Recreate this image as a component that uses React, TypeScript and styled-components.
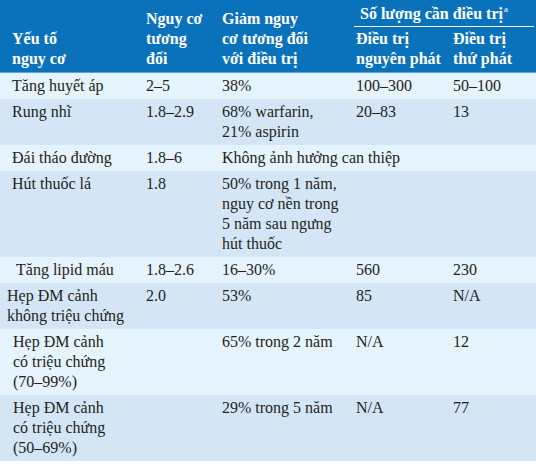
import { FC } from "react";
import styled, { createGlobalStyle } from "styled-components";

const serif = `"Liberation Serif", "DejaVu Serif", serif`;

const GlobalStyle = createGlobalStyle`
	html, body {
		margin: 0;
		padding: 0;
		background: #ffffff;
	}
`;

interface IRow {
	factor: string[];
	relative: string;
	reduction: string[];
	primary?: string;
	secondary?: string;
	span?: boolean;
	indent?: number;
}

const rows: IRow[] = [
	{ factor: ["Tăng huyết áp"], relative: "2–5", reduction: ["38%"], primary: "100–300", secondary: "50–100" },
	{ factor: ["Rung nhĩ"], relative: "1.8–2.9", reduction: ["68% warfarin,", "21% aspirin"], primary: "20–83", secondary: "13" },
	{ factor: ["Đái tháo đường"], relative: "1.8–6", reduction: ["Không ảnh hưởng can thiệp"], span: true },
	{
		factor: ["Hút thuốc lá"],
		relative: "1.8",
		reduction: ["50% trong 1 năm,", "nguy cơ nền trong", "5 năm sau ngưng", "hút thuốc"],
	},
	{ factor: ["Tăng lipid máu"], relative: "1.8–2.6", reduction: ["16–30%"], primary: "560", secondary: "230", indent: 4 },
	{ factor: ["Hẹp ĐM cảnh", "không triệu chứng"], relative: "2.0", reduction: ["53%"], primary: "85", secondary: "N/A", indent: -5 },
	{ factor: ["Hẹp ĐM cảnh", "có triệu chứng", "(70–99%)"], relative: "", reduction: ["65% trong 2 năm"], primary: "N/A", secondary: "12", indent: 1 },
	{ factor: ["Hẹp ĐM cảnh", "có triệu chứng", "(50–69%)"], relative: "", reduction: ["29% trong 5 năm"], primary: "N/A", secondary: "77", indent: 1 },
];

const Lines: FC<{ items: string[] }> = ({ items }) => (
	<>
		{items.map((item, i) => (
			<Line key={i}>{item}</Line>
		))}
	</>
);

export default function App() {
	return (
		<>
			<GlobalStyle />
			<Table>
				<colgroup>
					<col style={{ width: 140 }} />
					<col style={{ width: 76 }} />
					<col style={{ width: 134 }} />
					<col style={{ width: 97 }} />
					<col style={{ width: 89 }} />
				</colgroup>
				<thead>
					<tr>
						<HeadCell rowSpan={2}>
							<Lines items={["Yếu tố", "nguy cơ"]} />
						</HeadCell>
						<HeadCell rowSpan={2}>
							<Lines items={["Nguy cơ", "tương", "đối"]} />
						</HeadCell>
						<HeadCell rowSpan={2}>
							<Lines items={["Giảm nguy", "cơ tương đối", "với điều trị"]} />
						</HeadCell>
						<GroupCell colSpan={2}>
							<GroupTitle>
								Số lượng cần điều trị<Sup>a</Sup>
							</GroupTitle>
						</GroupCell>
					</tr>
					<tr>
						<SubHeadCell>
							<Lines items={["Điều trị", "nguyên phát"]} />
						</SubHeadCell>
						<SubHeadCell>
							<Lines items={["Điều trị", "thứ phát"]} />
						</SubHeadCell>
					</tr>
				</thead>
				<tbody>
					{rows.map((row, i) => (
						<Row key={i} $shade={i % 2 === 1}>
							<FactorCell $indent={row.indent ?? 0}>
								<Lines items={row.factor} />
							</FactorCell>
							<Cell>{row.relative}</Cell>
							{row.span ? (
								<Cell colSpan={3}>
									<Lines items={row.reduction} />
								</Cell>
							) : (
								<>
									<Cell>
										<Lines items={row.reduction} />
									</Cell>
									<Cell>{row.primary}</Cell>
									<Cell>{row.secondary}</Cell>
								</>
							)}
						</Row>
					))}
				</tbody>
			</Table>
		</>
	);
}

const Table = styled.table`
	width: 536px;
	border-collapse: collapse;
	table-layout: fixed;
	font-family: ${serif};
	font-size: 16px;
	line-height: 20px;
	color: #231f20;
`;

const Line = styled.div`
	white-space: nowrap;
`;

const HeadCell = styled.th`
	background: #0a72ba;
	color: #ffffff;
	font-size: 16px;
	font-weight: 700;
	text-align: left;
	vertical-align: bottom;
	padding: 6px 4px 3px 6px;
	border-bottom: 1px solid #5ea3d6;
	&:first-child {
		padding-left: 12px;
	}
`;

const GroupCell = styled.th`
	background: #0a72ba;
	color: #ffffff;
	font-size: 16px;
	font-weight: 700;
	text-align: left;
	vertical-align: top;
	padding: 4px 4px 0 4px;
`;

const GroupTitle = styled.div`
	white-space: nowrap;
	padding: 0 0 2px 6px;
	border-bottom: 1px solid #ffffff;
	margin-right: -2px;
`;

const Sup = styled.sup`
	font-size: 9px;
	font-weight: 400;
	line-height: 0;
	vertical-align: 7px;
	margin-left: 1px;
`;

const SubHeadCell = styled.th`
	background: #0a72ba;
	color: #ffffff;
	font-size: 16px;
	font-weight: 700;
	text-align: left;
	vertical-align: bottom;
	padding: 2px 0 3px 6px;
	border-bottom: 1px solid #5ea3d6;
`;

const Row = styled.tr<{ $shade: boolean }>`
	background: ${({ $shade }) => ($shade ? "#d4e6f5" : "#e5f3fc")};
`;

const Cell = styled.td`
	vertical-align: top;
	text-align: left;
	padding: 3px 2px 3px 6px;
	white-space: nowrap;
`;

const FactorCell = styled(Cell)<{ $indent: number }>`
	padding-left: ${({ $indent }) => 12 + $indent}px;
`;
